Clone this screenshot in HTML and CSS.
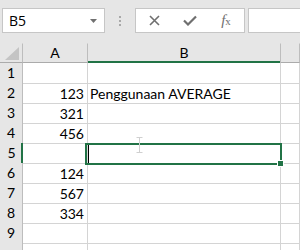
FILE: index.html
```html
<!DOCTYPE html>
<html lang="en">
<head>
    <meta charset="UTF-8">
    <title>Penggunaan AVERAGE</title>
    <link rel="stylesheet" href="styles.css">
</head>
<body>
    <div class="topbar">
        <div class="namebox">
            <span>B5</span>
            <svg class="caret-down" width="7" height="4" viewBox="0 0 7 4"><polygon points="0,0 7,0 3.5,4" fill="#707070"/></svg>
        </div>
        <div class="dots"><i></i><i></i><i></i></div>
        <div class="fxbtns">
            <span class="btn">
                <svg width="11" height="11" viewBox="0 0 11 11"><path d="M1 1 L10 10 M10 1 L1 10" stroke="#6f6f6f" stroke-width="1.6" fill="none"/></svg>
            </span>
            <span class="btn">
                <svg width="14" height="11" viewBox="0 0 14 11"><path d="M1 5.5 L5 9.5 L13 1.5" stroke="#6f6f6f" stroke-width="2.2" fill="none"/></svg>
            </span>
            <span class="btn fx"><i>f</i><sub>x</sub></span>
        </div>
        <div class="formula"></div>
    </div>

    <div class="sheet">
        <div class="row head">
            <div class="rh corner">
                <svg width="14" height="13" viewBox="0 0 14 13"><polygon points="14,0 14,13 0,13" fill="#c4c4c4"/></svg>
            </div>
            <div class="ch">A</div>
            <div class="ch active">B</div>
            <div class="ch"></div>
        </div>
        <div class="row"><div class="rh">1</div><div class="c num"></div><div class="c"></div><div class="c"></div></div>
        <div class="row"><div class="rh">2</div><div class="c num">123</div><div class="c">Penggunaan AVERAGE</div><div class="c"></div></div>
        <div class="row"><div class="rh">3</div><div class="c num">321</div><div class="c"></div><div class="c"></div></div>
        <div class="row"><div class="rh">4</div><div class="c num">456</div><div class="c"></div><div class="c"></div></div>
        <div class="row"><div class="rh active">5</div><div class="c num"></div><div class="c"></div><div class="c"></div></div>
        <div class="row"><div class="rh">6</div><div class="c num">124</div><div class="c"></div><div class="c"></div></div>
        <div class="row"><div class="rh">7</div><div class="c num">567</div><div class="c"></div><div class="c"></div></div>
        <div class="row"><div class="rh">8</div><div class="c num">334</div><div class="c"></div><div class="c"></div></div>
        <div class="row"><div class="rh">9</div><div class="c num"></div><div class="c"></div><div class="c"></div></div>
        <div class="row"><div class="rh"></div><div class="c num"></div><div class="c"></div><div class="c"></div></div>

        <div class="selection">
            <span class="text-caret"></span>
            <span class="handle"></span>
        </div>
        <svg class="ibeam" width="7" height="16" viewBox="0 0 7 16"><path d="M0.5 0.5 H6.5 M3.5 0.5 V15.5 M0.5 15.5 H6.5" stroke="#d0d0d0" stroke-width="1" fill="none"/></svg>
    </div>
</body>
</html>
```

FILE: styles.css
```css
html, body {
    margin: 0;
    padding: 0;
    height: 250px;
    overflow: hidden;
    background: #fff;
}

body {
    font-family: Lato, "Liberation Sans", sans-serif;
    font-size: 14px;
    color: #000;
}

/* Formula bar */
.topbar {
    height: 43px;
    box-sizing: border-box;
    padding-top: 8px;
    background: #e6e6e6;
    display: flex;
    align-items: flex-start;
}

.namebox {
    margin-left: 2px;
    width: 103px;
    height: 25px;
    box-sizing: border-box;
    border: 1px solid #c6c6c6;
    background: #fff;
    display: flex;
    align-items: center;
    justify-content: space-between;
    padding: 0 7px 0 6px;
    font-family: "Open Sans", sans-serif;
    font-size: 14px;
}

.dots {
    width: 30px;
    height: 25px;
    display: flex;
    flex-direction: column;
    align-items: center;
    justify-content: center;
    gap: 2px;
}

.dots i {
    width: 2px;
    height: 2px;
    background: #a8a8a8;
}

.fxbtns {
    width: 110px;
    height: 25px;
    box-sizing: border-box;
    border: 1px solid #c6c6c6;
    background: #fff;
    display: flex;
}

.btn {
    width: 36px;
    display: flex;
    align-items: center;
    justify-content: center;
}

.fx {
    font-family: "Liberation Serif", serif;
    color: #6f6f6f;
    font-size: 15px;
}

.fx sub {
    font-size: 11px;
    vertical-align: -2px;
}

.formula {
    flex: 1;
    margin-left: 3px;
    height: 25px;
    box-sizing: border-box;
    border: 1px solid #c6c6c6;
    border-right: none;
    background: #fff;
}

/* Grid */
.sheet {
    position: relative;
}

.row {
    display: grid;
    grid-template-columns: 23px 65px 193px 1fr;
    height: 20px;
}

.row > div {
    box-sizing: border-box;
    border-right: 1px solid #d4d4d4;
    border-bottom: 1px solid #d4d4d4;
    line-height: 20px;
    white-space: nowrap;
}

.head > div {
    background: #e6e6e6;
    border-right-color: #bdbdbd;
    border-bottom-color: #ababab;
    border-top: 1px solid #e6e6e6;
    line-height: 18px;
    text-align: center;
}

.ch.active {
    border-bottom: none;
    box-shadow: inset 0 -2px 0 #217346;
}

.corner {
    display: flex;
    align-items: flex-end;
    justify-content: flex-end;
    padding: 0 3px 2px 0;
}

.corner svg {
    display: block;
}

.rh {
    background: #e6e6e6;
    text-align: center;
    border-right-color: #bdbdbd !important;
    border-bottom-color: #d4d4d4;
}

.rh.active {
    border-right: none !important;
    box-shadow: inset -2px 0 0 #217346;
}

.c {
    padding: 1px 2px 0 2px;
    line-height: 19px !important;
    overflow: visible;
}

.num {
    text-align: right;
    padding-right: 3px;
}

/* Active cell */
.selection {
    position: absolute;
    left: 85px;
    top: 100px;
    width: 197px;
    height: 22px;
    box-sizing: border-box;
    border: 2px solid #217346;
}

.text-caret {
    position: absolute;
    left: 1px;
    top: 0;
    width: 1px;
    height: 18px;
    background: #000;
}

.handle {
    position: absolute;
    right: -4px;
    bottom: -4px;
    width: 5px;
    height: 5px;
    background: #217346;
    border: 1px solid #fff;
}

.ibeam {
    position: absolute;
    left: 136px;
    top: 94px;
}
```
